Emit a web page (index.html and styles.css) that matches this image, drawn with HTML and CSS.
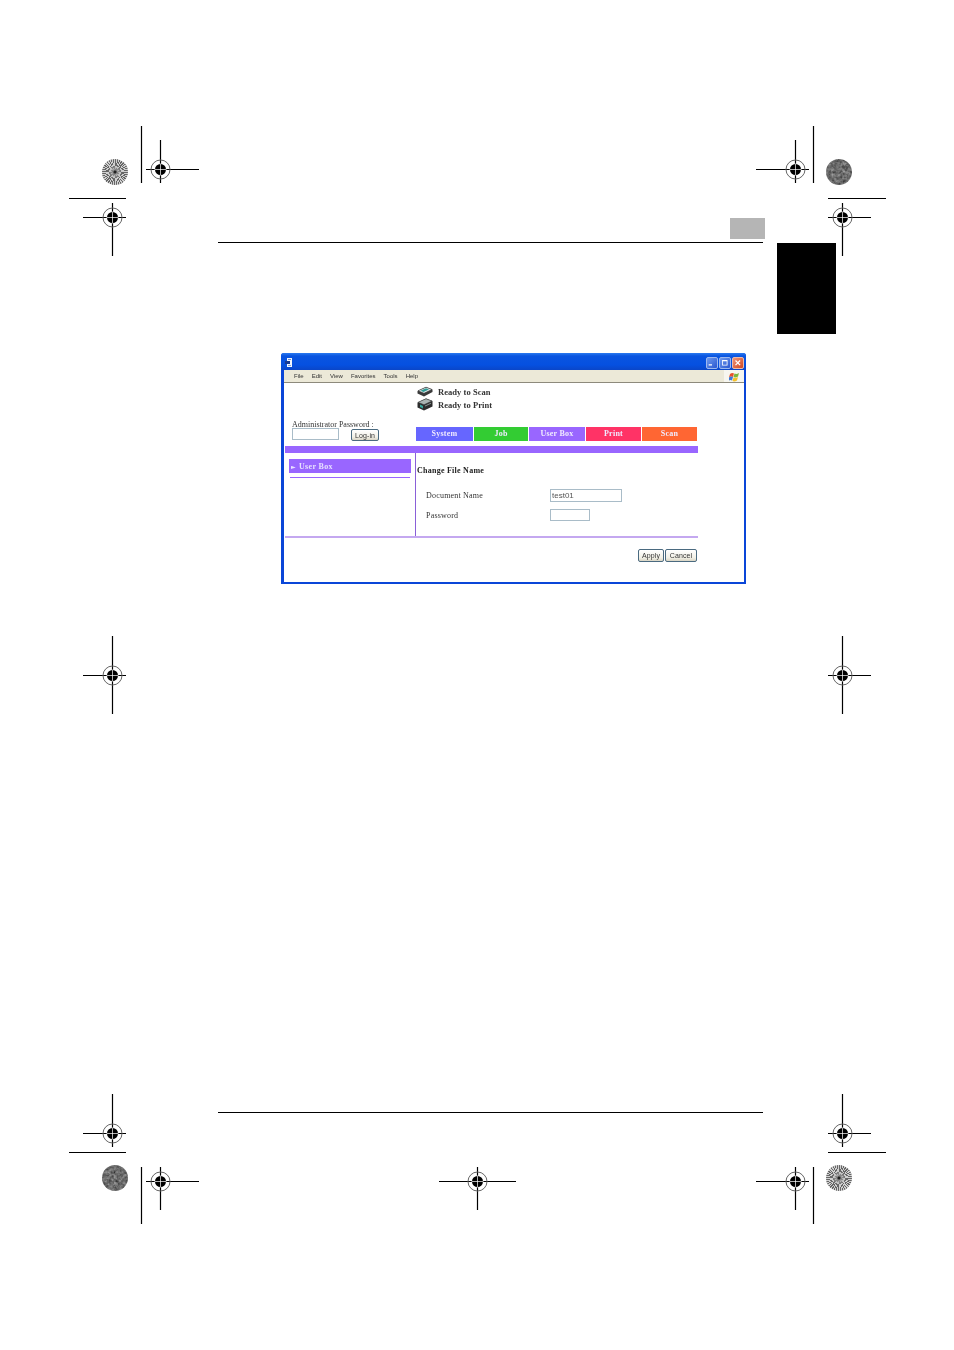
FILE: index.html
```html
<!DOCTYPE html>
<html lang="en">
<head>
<meta charset="utf-8">
<title>Change File Name</title>
<link rel="stylesheet" href="styles.css">
</head>
<body>
<div class="page">
  <header class="page-head">
    <div class="chapter-box"></div>
    <div class="rule"></div>
  </header>
  <div class="side-tab"></div>

  <section class="window">
    <div class="titlebar">
      <svg class="app-icon" viewBox="0 0 8 9"><rect x="2" y="0" width="5" height="9" fill="#f4f7fc"/><rect x="3" y="1" width="3" height="1" fill="#6f8fd0"/><rect x="0" y="3" width="5" height="3" fill="#173a94"/><rect x="3" y="7" width="3" height="1" fill="#7f9fdc"/></svg>
      <div class="win-buttons">
        <span class="win-btn blue"><svg viewBox="0 0 12 12"><rect x="2" y="7.500" width="4" height="1.500" fill="#fff"/></svg></span>
        <span class="win-btn blue"><svg viewBox="0 0 12 12"><path d="M2.500 2.500h6.500v6.500h-6.500zM3.500 4v4h4.500v-4z" fill="#fff" fill-rule="evenodd"/></svg></span>
        <span class="win-btn red"><svg viewBox="0 0 12 12"><path d="M3 3l5.500 5.500M8.500 3l-5.500 5.500" stroke="#fff" stroke-width="1.500"/></svg></span>
      </div>
    </div>
    <div class="menubar">
      <nav class="menu"><span>File</span><span>Edit</span><span>View</span><span>Favorites</span><span>Tools</span><span>Help</span></nav>
      <div class="flag-box">
        <svg class="flag" viewBox="0 0 11 11"><path d="M1 3q2-1.500 4-.5l-1 3.500q-2-1-4 .5z" fill="#e8502a"/><path d="M5.500 2.500q2 1 4.500-.5l-1 3.500q-2.500 1.500-4.500.5z" fill="#7cb63a"/><path d="M0 6.500q2-1.500 4-.5l-1 3.500q-2-1-4 .5z" fill="#3c78d8"/><path d="M4.500 6.500q2 1 4.500-.5l-1 3.500q-2.500 1.500-4.500.5z" fill="#f5c02a"/></svg>
      </div>
    </div>
    <div class="content">
      <div class="top">
        <div class="login">
          <div class="login-label">Administrator Password :</div>
          <div class="login-row">
            <span class="field login-field"></span>
            <span class="btn login-btn">Log-in</span>
          </div>
        </div>
        <div class="top-right">
          <div class="status">
            <svg class="printer" viewBox="0 0 16 11"><path d="M.5 5L9 1l6.500 2.500v2.500L7 10.500.5 7.500z" fill="#3a3a3a"/><path d="M1 4.800L9 1.200l6 2.300-8 3.800z" fill="#e4e8e8" stroke="#333" stroke-width=".6"/><path d="M3.500 4.800L9 2.300l3 1.200-5.500 2.600z" fill="#2f9c96"/></svg>
            <span>Ready to Scan</span>
          </div>
          <div class="status">
            <svg class="printer tall" viewBox="0 0 16 13"><path d="M.5 4.500L9 .5l6.500 2.500v5.500L7 12.500.5 9.500z" fill="#2c2c2c"/><path d="M1 4.300L9 .8l6 2.200-8 3.700z" fill="#aab4b2" stroke="#333" stroke-width=".5"/><path d="M3 6.500l3 1.500v2.500L3 9z" fill="#38a89e"/><path d="M8 7.500l6-2.800v1l-6 2.800z" fill="#8a9492"/></svg>
            <span>Ready to Print</span>
          </div>
          <div class="tabs">
            <span class="tab system">System</span>
            <span class="tab job">Job</span>
            <span class="tab box">User Box</span>
            <span class="tab print">Print</span>
            <span class="tab scan">Scan</span>
          </div>
        </div>
      </div>
      <div class="band"></div>
      <div class="main">
        <aside class="sidebar">
          <div class="side-item"><span class="arrow">&#9658;</span>User Box</div>
          <div class="side-line"></div>
        </aside>
        <div class="form">
          <h1 class="form-title">Change File Name</h1>
          <div class="form-row first">
            <span class="form-label">Document Name</span>
            <span class="field name-field">test01</span>
          </div>
          <div class="form-row second">
            <span class="form-label">Password</span>
            <span class="field pass-field"></span>
          </div>
        </div>
      </div>
      <div class="divider"></div>
      <div class="actions">
        <span class="btn apply">Apply</span>
        <span class="btn cancel">Cancel</span>
      </div>
    </div>
  </section>

  <footer class="page-foot"><div class="rule"></div></footer>

  <svg class="marks" width="954" height="1350" viewBox="0 0 954 1350" aria-hidden="true">
    <defs>
      <filter id="grain" x="0" y="0" width="100%" height="100%" color-interpolation-filters="sRGB">
        <feTurbulence type="fractalNoise" baseFrequency="0.35" numOctaves="2" seed="4"/>
        <feColorMatrix type="matrix" values="0.3 0.3 0.3 0 -0.03  0.3 0.3 0.3 0 -0.03  0.3 0.3 0.3 0 -0.03  0 0 0 0 1"/>
        <feComposite in2="SourceAlpha" operator="in"/>
      </filter>
      <g id="target">
        <circle r="9.500" fill="none" stroke="#666" stroke-width="1"/>
        <circle r="5.500" fill="#000"/>
        <path d="M-6 0h12M0-6v12" stroke="#fff" stroke-width=".7"/>
      </g>
    </defs>
    <g stroke="#000" stroke-width="1.200" fill="none">
      <path d="M141.500 126v57M69 198.500h57M813.500 126v57M828 198.500h58"/>
      <path d="M69 1152.500h57M141.500 1167v57M813.500 1167v57M828 1152.500h58"/>
      <path d="M146 169.500h53M160.500 140v43M83 217.500h43M112.500 203v53"/>
      <path d="M756 169.500h53M795.500 140v43M828 217.500h43M842.500 203v53"/>
      <path d="M83 675.500h43M112.500 636v78M828 675.500h43M842.500 636v78"/>
      <path d="M83 1133.500h43M112.500 1094v53M146 1181.500h53M160.500 1167v43"/>
      <path d="M439 1181.500h77M477.500 1167v43"/>
      <path d="M756 1181.500h53M795.500 1167v43M828 1133.500h43M842.500 1094v53"/>
    </g>
    <use href="#target" x="160.500" y="169.500"/>
    <use href="#target" x="112.500" y="217.500"/>
    <use href="#target" x="795.500" y="169.500"/>
    <use href="#target" x="842.500" y="217.500"/>
    <use href="#target" x="112.500" y="675.500"/>
    <use href="#target" x="842.500" y="675.500"/>
    <use href="#target" x="112.500" y="1133.500"/>
    <use href="#target" x="160.500" y="1181.500"/>
    <use href="#target" x="477.500" y="1181.500"/>
    <use href="#target" x="795.500" y="1181.500"/>
    <use href="#target" x="842.500" y="1133.500"/>
    <circle cx="839" cy="172" r="13" fill="#666" filter="url(#grain)"/>
    <circle cx="115" cy="1178" r="13" fill="#666" filter="url(#grain)"/>
  </svg>
  <div class="burst burst-top"></div>
  <div class="burst burst-bottom"></div>
</div>
</body>
</html>
```
FILE: styles.css
```css
* { box-sizing: border-box; }
html, body { margin: 0; padding: 0; background: #fff; }
.page { position: relative; width: 954px; height: 1350px; overflow: hidden; padding-top: 218px; }

.page-head { margin-left: 218px; width: 547px; }
.chapter-box { width: 35px; height: 21px; margin-left: 512px; background: #b5b5b5; }
.rule { width: 545px; height: 1px; background: #000; }
.page-head .rule { margin-top: 3px; }
.page-foot { margin: 528px 0 0 218px; }

.side-tab { position: absolute; left: 777px; top: 243px; width: 59px; height: 91px; background: #000; }
.marks { position: absolute; left: 0; top: 0; pointer-events: none; }
.burst { position: absolute; width: 26px; height: 26px; border-radius: 50%; filter: blur(.6px);
  background: radial-gradient(circle, #222 0 1px, rgba(130,130,130,.9) 2px, rgba(170,170,170,.55) 4px, rgba(170,170,170,0) 7px),
    repeating-conic-gradient(#666 0 5deg, #d0d0d0 5deg 10deg); }
.burst-top { left: 102px; top: 159px; }
.burst-bottom { left: 826px; top: 1165px; }

.window { width: 465px; height: 231px; margin: 110px 0 0 281px; display: flex; flex-direction: column;
  background: #0a46d8; border-radius: 3px 3px 0 0; padding: 0 2px 2px 3px; filter: blur(.3px);
  font-family: "Liberation Serif", "Times New Roman", serif; color: #222; }
.titlebar { height: 17px; margin: 0 -2px 0 -3px; padding: 0 2px 0 4px; display: flex; align-items: center; justify-content: space-between;
  background: linear-gradient(#2a7af0 0, #0a55e0 3px, #0550e0 12px, #0a46c8 100%); border-radius: 3px 3px 0 0; }
.app-icon { width: 8px; height: 9px; margin-top: 2px; }
.win-buttons { display: flex; gap: 1px; margin-top: 3px; }
.win-btn { width: 12px; height: 12px; border: 1px solid #9db8ee; border-radius: 2px; display: block; }
.win-btn svg { display: block; width: 100%; height: 100%; }
.win-btn.blue { background: linear-gradient(135deg, #6f9aee, #2a58d0); }
.win-btn.red { background: linear-gradient(135deg, #ee9478, #d04820); border-color: #eebba8; }

.menubar { height: 13px; display: flex; justify-content: space-between; align-items: stretch; background: #ece9d8; border-bottom: 1px solid #8d8a7c; }
.menu { display: flex; gap: 8px; padding-left: 10px; font: 6px/12px "Liberation Sans", Arial, sans-serif; color: #333; }
.flag-box { width: 20px; background: #f7f6ef; display: flex; align-items: center; justify-content: center; }
.flag { width: 11px; height: 11px; }

.content { flex: 1; background: #fff; display: flex; flex-direction: column; }
.top { height: 63px; display: flex; }
.login { width: 132px; padding: 37px 0 0 8px; }
.login-label { font-size: 8px; line-height: 9px; height: 8px; white-space: nowrap; color: #333; }
.login-row { display: flex; align-items: flex-start; }
.field { display: block; border: 1px solid #a9bcc8; background: #fff; font: 8px/11px "Liberation Sans", Arial, sans-serif; color: #555; padding-left: 1px; }
.login-field { width: 47px; height: 12px; }
.btn { display: block; height: 13px; border: 1px solid #4a6a80; border-radius: 2px; background: linear-gradient(#fff, #f2f0e6 70%, #d8d4c4); font: 7px/11px "Liberation Sans", Arial, sans-serif; color: #333; text-align: center; letter-spacing: .1px; }
.login-btn { width: 28px; height: 12px; margin: 1px 0 0 12px; }

.top-right { flex: 1; padding: 2px 0 0; display: flex; flex-direction: column; }
.status { height: 13px; padding-left: 1px; display: flex; align-items: center; gap: 5px; font-size: 8.500px; font-weight: bold; letter-spacing: .05px; white-space: nowrap; color: #333; }
.printer { width: 16px; height: 11px; flex: none; }
.printer.tall { height: 13px; }
.tabs { display: flex; gap: 1px; margin-top: 16px; }
.tab { height: 14px; width: 55px; text-align: center; font-size: 8px; font-weight: bold; line-height: 14px; color: #f0eaff; letter-spacing: .25px; }
.tab.system { width: 57px; background: #6666ff; }
.tab.job { width: 54px; background: #33cc33; }
.tab.box { width: 56px; background: #9966ff; }
.tab.print { background: #ff3366; }
.tab.scan { background: #ff6633; }

.band { width: 413px; height: 7px; margin-left: 1px; background: #9966ff; }
.main { height: 83px; display: flex; }
.sidebar { width: 132px; padding: 6px 0 0 5px; border-right: 1px solid #8a60d8; }
.side-item { width: 122px; height: 14px; background: #9966ff; color: #e8e0ff; font-size: 8px; font-weight: bold; line-height: 15px; letter-spacing: .35px; padding-left: 2px; }
.arrow { font: 6px/14px "DejaVu Sans", sans-serif; margin-right: 3px; }
.side-line { width: 120px; height: 1px; margin: 4px 0 0 1px; background: #9966ff; }
.form { flex: 1; padding: 12px 0 0 1px; }
.form-title { margin: 0; font-size: 8px; font-weight: bold; line-height: 11px; letter-spacing: .25px; color: #222; }
.form-row { display: flex; align-items: center; height: 13px; }
.form-row.first { margin-top: 13px; }
.form-row.second { margin-top: 6px; }
.form-label { width: 133px; padding-left: 9px; font-size: 8px; letter-spacing: .2px; color: #333; }
.form-row.second .form-label { padding-top: 2px; }
.name-field { width: 72px; height: 13px; }
.pass-field { width: 40px; height: 12px; }

.divider { width: 413px; height: 2px; margin-left: 1px; background: #c4a8f0; }
.actions { display: flex; justify-content: flex-end; gap: 1px; width: 413px; margin-top: 11px; }
.apply { width: 26px; }
.cancel { width: 32px; }
```
